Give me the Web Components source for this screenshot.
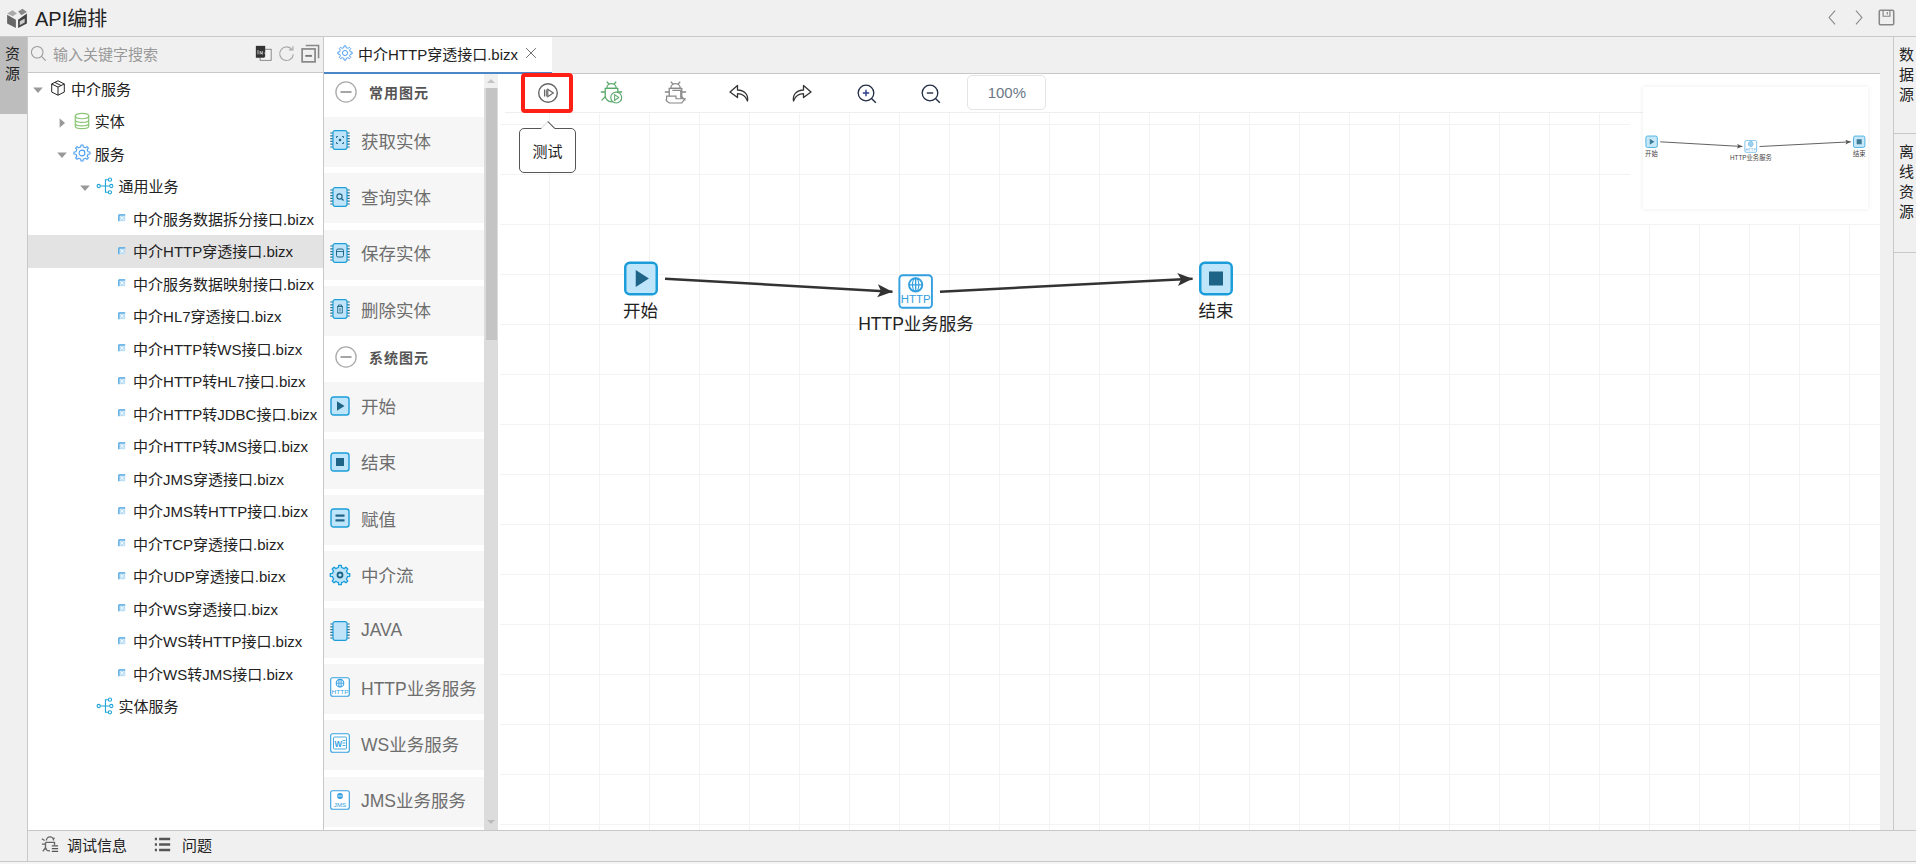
<!DOCTYPE html>
<html lang="zh">
<head>
<meta charset="utf-8">
<title>API编排</title>
<style>
  html, body { margin: 0; height: 100%; overflow: hidden; background: #f5f5f5; }
  body { font-family: "Liberation Sans", "Noto Sans CJK SC", sans-serif; color: #222; }
</style>
</head>
<body>
<app-shell></app-shell>
<script>
// ---- icons ----
function gearPath(cx, cy, R, r, n) {
  let d = "";
  const step = (Math.PI * 2) / n;
  for (let i = 0; i < n; i++) {
    const a = i * step;
    const pts = [[r, a - step * 0.5], [r, a - step * 0.27], [R, a - step * 0.17], [R, a + step * 0.17], [r, a + step * 0.27]];
    pts.forEach((p, j) => {
      d += (i === 0 && j === 0 ? "M" : "L") + (cx + p[0] * Math.cos(p[1])).toFixed(2) + " " + (cy + p[0] * Math.sin(p[1])).toFixed(2);
    });
  }
  return d + "Z";
}

function chip(inner) {
  let pins = "";
  for (let y = 3; y < 18; y += 2.8) pins += `M.3 ${y}h2.7M17 ${y}h2.7`;
  return `<path d="${pins}" stroke="#2b6f92" stroke-width="1.2"/>
    <rect x="3" y=".7" width="14" height="18.6" rx="2" fill="#bfe4fa" stroke="#1c9fd8" stroke-width="1.2"/>${inner}`;
}

const box = (inner) => `<rect x="1" y="1" width="18" height="18" rx="2.5" fill="#bfe5fa" stroke="#1b9dd9" stroke-width="1.4"/>${inner}`;
const dark = "#1d6486";
const blue = "#35a0e0";
const tool = "#666";
const bug = (c) => `<g fill="none" stroke="${c}" stroke-width="1.25"><path d="M6.500 7a4.500 4.500 0 0 1 9 0z"/><path d="M5 7h12v7a6 6 0 0 1-12 0z"/><path d="M6.500 .8l2.500 2.500M15.500 .8L13 3.300M5 10.500H.8M17 10.500h4.200M5 15l-3.500 3.500M17 15l3.500 3.500"/></g>`;

const ICONS = {
  logo: `<path d="M1 6l5-3 4 3-4 2.500z" fill="#aaa"/><path d="M11 4l4-2.500 4 3-5 3z" fill="#8a8a8a"/><path d="M1 7l8 4.500V19l-8-4z" fill="#666"/><path d="M19 6l-8 5.500V19l8-4z" fill="#444"/><path d="M12.500 13l4.500-2.500V14l-4.500 2.500z" fill="#ccc"/>`,
  search: `<circle cx="8.500" cy="8.500" r="6.800" fill="none" stroke="#999" stroke-width="1.200"/><path d="M13.500 13.500l5 5" stroke="#999" stroke-width="1.300"/>`,
  translate: `<rect x="6" y="5" width="13" height="13" fill="#f4f4f4" stroke="#777"/><rect x="1" y="1" width="11" height="14" fill="#333"/><path d="M3.500 6v5M6 11V7.500l2.500 3.500V7M11 9l5 6M16 9l-5 6" stroke="#eee" stroke-width=".9" fill="none"/>`,
  refresh: `<path d="M16.500 5.500A8 8 0 1 0 18 11" fill="none" stroke="#aaa" stroke-width="1.400"/><path d="M13 5.800h4.500V1.500" fill="none" stroke="#aaa" stroke-width="1.400"/>`,
  collapse: `<rect x="1.200" y="5.200" width="13.600" height="13.600" fill="none" stroke="#888" stroke-width="1.800"/><path d="M5 1.500h13.500V15" fill="none" stroke="#888" stroke-width="1.600"/><path d="M4.500 12.500h7" stroke="#777" stroke-width="2"/>`,
  cube: `<g fill="none" stroke="#222" stroke-width="1.100" stroke-linejoin="round"><path d="M10 2l7 3.500v9L10 18l-7-3.500v-9z"/><path d="M3 5.500l7 3.500 7-3.500M10 9v9M6.500 3.800l7 3.500"/></g>`,
  db: `<g fill="none" stroke="#8cc578" stroke-width="1.300"><ellipse cx="10" cy="4.500" rx="7.500" ry="3"/><path d="M2.500 4.500v11c0 1.700 3.400 3 7.500 3s7.500-1.300 7.500-3v-11M2.500 8.500c0 1.700 3.400 3 7.500 3s7.500-1.300 7.500-3M2.500 12.500c0 1.700 3.400 3 7.500 3s7.500-1.300 7.500-3"/></g>`,
  cog: `<path d="${gearPath(10, 10, 9, 6.800, 8)}" fill="none" stroke="#4a9df0" stroke-width="1.200" stroke-linejoin="round"/><circle cx="10" cy="10" r="3.200" fill="none" stroke="#4a9df0" stroke-width="1.200"/>`,
  nodes: `<g fill="none" stroke="#1ea5d8" stroke-width="1.200"><circle cx="3" cy="10" r="1.800"/><circle cx="15.500" cy="3" r="1.800"/><circle cx="17" cy="10" r="1.800"/><circle cx="15.500" cy="17" r="1.800"/><path d="M5 10h10M13.700 3H10.500v14h3.200"/></g>`,
  leaf: `<rect x="2" y="2" width="16" height="16" fill="#bcdff5"/><path d="M2 2h16M2 2v16" stroke="#4aa3e0" stroke-width="3"/><path d="M6 6l8 8M14 6l-8 8" stroke="#fff" stroke-width="2"/>`,
  "down": `<path d="M2 6h16l-8 9z" fill="#999"/>`,
  "right": `<path d="M6 2v16l9-8z" fill="#999"/>`,
  minus: `<circle cx="10" cy="10" r="9.200" fill="none" stroke="#aaa" stroke-width="1.200"/><path d="M5 10h10" stroke="#999" stroke-width="1.600"/>`,
  "chip-get": chip(`<path d="M6.500 8V6.500H8M12 6.500h1.500V8M13.500 12v1.500H12M8 13.500H6.500V12" fill="none" stroke="${dark}" stroke-width=".9"/><circle cx="10" cy="10" r="1.300" fill="${dark}"/>`),
  "chip-query": chip(`<circle cx="9.500" cy="9.500" r="2.600" fill="none" stroke="${dark}" stroke-width="1.100"/><path d="M11.500 11.500l2 2" stroke="${dark}" stroke-width="1.200"/>`),
  "chip-save": chip(`<rect x="6.500" y="6" width="7" height="8" rx="1.500" fill="none" stroke="${dark}" stroke-width="1"/><path d="M6.500 8.500h7" stroke="${dark}" stroke-width=".9"/>`),
  "chip-del": chip(`<path d="M7 7.500h6M8.500 7.500V6h3v1.500M7.700 7.500v6.500h4.600V7.500M10 9v3.500" fill="none" stroke="${dark}" stroke-width=".9"/>`),
  "chip": chip(""),
  start: box(`<path d="M7 5.200l7.500 4.800L7 14.800z" fill="${dark}"/>`),
  end: box(`<rect x="6" y="6" width="8" height="8" fill="${dark}"/>`),
  assign: box(`<rect x="5.500" y="6.500" width="9" height="2.200" fill="${dark}"/><rect x="5.500" y="11.300" width="9" height="2.200" fill="${dark}"/>`),
  flow: `<path d="${gearPath(10, 10, 9.800, 7.600, 8)}" fill="#bfe5fa" stroke="#1b9dd9" stroke-width="1.300" stroke-linejoin="round"/><circle cx="10" cy="10" r="2.500" fill="none" stroke="${dark}" stroke-width="1.800"/>`,
  http: `<rect x=".7" y=".7" width="18.600" height="18.600" rx="2" fill="#fff" stroke="${blue}" stroke-width="1.100"/><circle cx="10" cy="6.200" r="3.800" fill="none" stroke="${blue}" stroke-width="1.100"/><path d="M6.200 6.200h7.600M10 2.400v7.600" stroke="${blue}" stroke-width=".8"/><ellipse cx="10" cy="6.200" rx="1.800" ry="3.800" fill="none" stroke="${blue}" stroke-width=".7"/><text x="10" y="16.700" text-anchor="middle" font-size="6.200" textLength="17" lengthAdjust="spacingAndGlyphs" fill="${blue}" font-family="Liberation Sans">HTTP</text>`,
  ws: `<rect x=".7" y=".7" width="18.600" height="18.600" rx="2" fill="#fff" stroke="${blue}" stroke-width="1.100"/><rect x="3.500" y="4" width="13" height="12" rx="1" fill="none" stroke="${blue}" stroke-width=".9"/><text x="4.600" y="13.500" font-size="9" font-weight="bold" fill="${blue}" font-family="Liberation Sans" textLength="7.500" lengthAdjust="spacingAndGlyphs">W</text><path d="M12.500 7.500h3M12.500 10h3M12.500 12.500h3" stroke="${blue}" stroke-width=".9"/>`,
  jms: `<rect x=".7" y=".7" width="18.600" height="18.600" rx="2" fill="#fff" stroke="${blue}" stroke-width="1.100"/><circle cx="10" cy="6" r="3" fill="${blue}"/><path d="M7.500 6h5" stroke="#fff" stroke-width=".8"/><text x="10" y="16.500" text-anchor="middle" font-size="6.200" fill="${blue}" font-family="Liberation Sans">JMS</text>`,
  run: `<circle cx="11" cy="11" r="9.300" fill="none" stroke="${tool}" stroke-width="1.400"/><path d="M7.500 7.500v7M9.300 7.500v7" stroke="${tool}" stroke-width="1.100"/><path d="M10.800 7.300l5.500 3.700-5.500 3.700z" fill="none" stroke="${tool}" stroke-width="1.200"/>`,
  debug: `${bug("#5aa96c")}<circle cx="15.500" cy="15.800" r="5.200" fill="#fff" stroke="#5aa96c" stroke-width="1.100"/><path d="M14 13l4 2.800-4 2.800z" fill="none" stroke="#5aa96c"/>`,
  "debug-off": `${bug("#888")}<path d="M8 9h8v7" fill="none" stroke="#888" stroke-width="1.100"/><path d="M2.500 14.500h9v2.500h8.500l-3 4H5l-2.500-2z" fill="#fff" stroke="#888" stroke-width="1.100"/>`,
  undo: `<path d="M9.500 3.500L2 10l7.500 5.500v-3.800c4.500 0 8 2 10 7.300 1-6.500-3-10.800-10-11z" fill="none" stroke="#333" stroke-width="1.300" stroke-linejoin="round"/>`,
  redo: `<path d="M12.500 3.500L20 10l-7.500 5.500v-3.800c-4.500 0-8 2-10 7.300-1-6.500 3-10.800 10-11z" fill="none" stroke="#333" stroke-width="1.300" stroke-linejoin="round"/>`,
  "zoom-in": `<circle cx="10" cy="10" r="7.800" fill="none" stroke="#222d44" stroke-width="1.300"/><path d="M15.800 15.800l4 4" stroke="#222d44" stroke-width="1.400"/><path d="M6.800 10h6.400M10 6.800v6.400" stroke="#2a3a8a" stroke-width="1.400"/>`,
  "zoom-out": `<circle cx="10" cy="10" r="7.800" fill="none" stroke="#222d44" stroke-width="1.300"/><path d="M15.800 15.800l4 4" stroke="#222d44" stroke-width="1.400"/><path d="M6.800 10h6.400" stroke="#222d44" stroke-width="1.400"/>`,
  close: `<path d="M3 3l14 14M17 3L3 17" stroke="#555" stroke-width="1.200"/>`,
  prev: `<path d="M13 2l-7 8 7 8" fill="none" stroke="#888" stroke-width="1.300"/>`,
  next: `<path d="M7 2l7 8-7 8" fill="none" stroke="#888" stroke-width="1.300"/>`,
  save: `<rect x="1.500" y="1.500" width="17" height="17" rx="1.500" fill="none" stroke="#888" stroke-width="1.800"/><path d="M6 2v6.500h8V2M11 3.500v3" fill="none" stroke="#888" stroke-width="1.400"/>`,
  "bug-info": `<g fill="none" stroke="#666" stroke-width="1.500"><path d="M6 5a4 4 0 0 1 8 0M5 7h10v3M5 7v6a4.500 4.500 0 0 0 5 3.500M5 9H1M1 3l3 2M15 2l-2 2M5 13l-3 4"/></g><path d="M12 11h7M12 14h7M12 17h7" stroke="#555" stroke-width="1.500"/>`,
  list: `<path d="M1 3.500h2.500M1 10h2.500M1 16.500h2.500" stroke="#555" stroke-width="3"/><path d="M6 3.500h13M6 10h13M6 16.500h13" stroke="#555" stroke-width="2.800"/>`,
};

class UiIcon extends HTMLElement {
  connectedCallback() {
    if (this.shadowRoot) return;
    const root = this.attachShadow({ mode: "open" });
    const name = this.getAttribute("name");
    const size = this.getAttribute("size") || 20;
    const vb = (name === "run" || name === "debug" || name === "debug-off" || name === "undo" || name === "redo") ? 22 : 20;
    root.innerHTML = `
      <style>:host{display:inline-flex;flex:none;width:${size}px;height:${size}px} svg{display:block;width:100%;height:100%;overflow:visible}</style>
      <svg viewBox="0 0 ${vb} ${vb}">${ICONS[name] || ""}</svg>`;
  }
}
customElements.define("ui-icon", UiIcon);

// ---- title bar ----
class TitleBar extends HTMLElement {
  constructor() {
    super();
    this.attachShadow({ mode: "open" });
    this.shadowRoot.innerHTML = `
      <style>
        :host { display: flex; align-items: center; height: 36px; border-bottom: 1px solid #c8c8c8; background: #f0f0f0; padding: 0 21px 0 6px; }
        .name { font-size: 20px; margin-left: 7px; color: #222; flex: 1; }
        .prev { margin-right: 9px; }
        .next { margin-right: 11px; }
      </style>
      <ui-icon name="logo" size="22"></ui-icon>
      <span class="name">API编排</span>
      <ui-icon class="prev" name="prev" size="17"></ui-icon>
      <ui-icon class="next" name="next" size="17"></ui-icon>
      <ui-icon name="save" size="17"></ui-icon>
    `;
  }
}
customElements.define("title-bar", TitleBar);

// ---- side rails ----
class RailTab extends HTMLElement {
  constructor() {
    super();
    this.attachShadow({ mode: "open" });
    this.shadowRoot.innerHTML = `
      <style>
        :host { display: block; box-sizing: border-box; padding: 9px 0 0 4px; font-size: 15px; color: #222; }
        :host([active]) { background: #bdbdbd; }
        :host([divided]) { border-bottom: 1px solid #c8c8c8; }
        span { display: block; width: 15px; writing-mode: vertical-rl; text-orientation: upright; letter-spacing: 5px; line-height: 15px; }
      </style>
      <span><slot></slot></span>
    `;
  }
}
customElements.define("rail-tab", RailTab);

// ---- resource tree ----
class TreeRow extends HTMLElement {
  constructor() {
    super();
    this.attachShadow({ mode: "open" });
  }
  connectedCallback() {
    const level = Number(this.getAttribute("level") || 0);
    const arrow = this.getAttribute("arrow");
    const icon = this.getAttribute("icon");
    const leaf = icon === "leaf";
    this.shadowRoot.innerHTML = `
      <style>
        :host { display: flex; align-items: center; box-sizing: border-box; height: 32.5px; padding-bottom: 1.5px; font-size: 15px; color: #222; padding-left: ${4 + level * 23.7}px; white-space: nowrap; }
        :host([selected]) { background: #e3e3e3; }
        .arrow { width: 12px; height: 12px; margin-right: ${leaf ? 3 : 5}px; flex: none; }
        .ico { margin-right: ${leaf ? 7 : 4}px; }
      </style>
      <span class="arrow">${arrow ? `<ui-icon name="${arrow}" size="12"></ui-icon>` : ""}</span>
      <ui-icon class="ico" name="${icon}" size="${leaf ? 8 : 18}"></ui-icon>
      <slot></slot>
    `;
  }
}
customElements.define("tree-row", TreeRow);

class ResourcePanel extends HTMLElement {
  constructor() {
    super();
    this.attachShadow({ mode: "open" });
    const files = ["中介服务数据拆分接口.bizx", "中介HTTP穿透接口.bizx", "中介服务数据映射接口.bizx", "中介HL7穿透接口.bizx",
      "中介HTTP转WS接口.bizx", "中介HTTP转HL7接口.bizx", "中介HTTP转JDBC接口.bizx", "中介HTTP转JMS接口.bizx", "中介JMS穿透接口.bizx",
      "中介JMS转HTTP接口.bizx", "中介TCP穿透接口.bizx", "中介UDP穿透接口.bizx", "中介WS穿透接口.bizx", "中介WS转HTTP接口.bizx", "中介WS转JMS接口.bizx"];
    this.shadowRoot.innerHTML = `
      <style>
        :host { display: flex; flex-direction: column; width: 295px; flex: none; border-right: 1px solid #c8c8c8; background: #fff; }
        .search { display: flex; align-items: center; box-sizing: border-box; height: 36px; background: #f0f0f0; border-bottom: 1px solid #c8c8c8; padding: 0 3px 2px 2px; }
        .search span { flex: 1; margin-left: 6px; font-size: 15px; color: #999; }
        .search .r { margin-left: 6px; }
      </style>
      <div class="search">
        <ui-icon name="search" size="17"></ui-icon>
        <span>输入关键字搜索</span>
        <ui-icon name="translate" size="17"></ui-icon>
        <ui-icon class="r" name="refresh" size="17"></ui-icon>
        <ui-icon class="r" name="collapse" size="19"></ui-icon>
      </div>
      <div class="tree">
        <tree-row level="0" arrow="down" icon="cube">中介服务</tree-row>
        <tree-row level="1" arrow="right" icon="db">实体</tree-row>
        <tree-row level="1" arrow="down" icon="cog">服务</tree-row>
        <tree-row level="2" arrow="down" icon="nodes">通用业务</tree-row>
        ${files.map((f, i) => `<tree-row level="3" icon="leaf" ${i === 1 ? "selected" : ""}>${f}</tree-row>`).join("")}
        <tree-row level="2" icon="nodes">实体服务</tree-row>
      </div>
    `;
  }
}
customElements.define("resource-panel", ResourcePanel);

// ---- tabs ----
class EditorTabs extends HTMLElement {
  constructor() {
    super();
    this.attachShadow({ mode: "open" });
    this.shadowRoot.innerHTML = `
      <style>
        :host { display: flex; box-sizing: border-box; height: 37px; border-bottom: 1px solid #c8c8c8; }
        .tab { display: flex; align-items: center; box-sizing: border-box; width: 228px; height: 37px; padding: 0 0 2px 13px; background: #fff; border-bottom: 2px solid #4a86c8; font-size: 15px; color: #222; white-space: nowrap; }
        .tab span { margin: 0 6px 0 5px; }
      </style>
      <div class="tab">
        <ui-icon name="cog" size="16"></ui-icon>
        <span>中介HTTP穿透接口.bizx</span>
        <ui-icon name="close" size="14"></ui-icon>
      </div>
    `;
  }
}
customElements.define("editor-tabs", EditorTabs);

// ---- palette ----
class PaletteGroup extends HTMLElement {
  constructor() {
    super();
    this.attachShadow({ mode: "open" });
    this.shadowRoot.innerHTML = `
      <style>
        :host { display: flex; align-items: center; box-sizing: border-box; height: 40px; padding: 0 0 10px 11px; font-size: 14px; font-weight: bold; letter-spacing: 1px; color: #555; }
        :host([first]) { height: 43px; padding-top: 3px; padding-bottom: 10px; }
        span { margin-left: 12px; }
      </style>
      <ui-icon name="minus" size="22"></ui-icon>
      <span><slot></slot></span>
    `;
  }
}
customElements.define("palette-group", PaletteGroup);

class PaletteItem extends HTMLElement {
  constructor() {
    super();
    this.attachShadow({ mode: "open" });
  }
  connectedCallback() {
    this.shadowRoot.innerHTML = `
      <style>
        :host { display: flex; align-items: center; box-sizing: border-box; flex: none; height: 50px; margin-bottom: 6.33px; padding: 0 0 3.5px 6px; background: #f6f6f6; font-size: 17.5px; color: #6e6e6e; white-space: nowrap; }
        span { margin-left: 11px; }
      </style>
      <ui-icon name="${this.getAttribute("icon")}" size="20"></ui-icon>
      <span><slot></slot></span>
    `;
  }
}
customElements.define("palette-item", PaletteItem);

class PalettePanel extends HTMLElement {
  constructor() {
    super();
    this.attachShadow({ mode: "open" });
    this.shadowRoot.innerHTML = `
      <style>
        :host { display: flex; flex: none; width: 174px; height: 756px; overflow: hidden; background: #fff; }
        .list { width: 160px; flex: none; }
        .bar { position: relative; width: 14px; flex: none; background: #dcdcdc; }
        .cap { height: 14px; background: #f0f0f0; display: flex; align-items: center; justify-content: center; }
        .cap i { width: 0; height: 0; border: 4px solid transparent; border-top: 0; border-bottom: 4px solid #c4c4c4; }
        .thumb { height: 252px; margin: 0 1px 0 2px; background: #c4c4c4; }
        .down { position: absolute; left: 3px; bottom: 6px; width: 0; height: 0; border: 4px solid transparent; border-bottom: 0; border-top: 4px solid #bbb; }
      </style>
      <div class="list">
        <palette-group first>常用图元</palette-group>
        <palette-item icon="chip-get">获取实体</palette-item>
        <palette-item icon="chip-query">查询实体</palette-item>
        <palette-item icon="chip-save">保存实体</palette-item>
        <palette-item icon="chip-del">删除实体</palette-item>
        <palette-group>系统图元</palette-group>
        <palette-item icon="start">开始</palette-item>
        <palette-item icon="end">结束</palette-item>
        <palette-item icon="assign">赋值</palette-item>
        <palette-item icon="flow">中介流</palette-item>
        <palette-item icon="chip">JAVA</palette-item>
        <palette-item icon="http">HTTP业务服务</palette-item>
        <palette-item icon="ws">WS业务服务</palette-item>
        <palette-item icon="jms">JMS业务服务</palette-item>
      </div>
      <div class="bar">
        <div class="cap"><i></i></div>
        <div class="thumb"></div>
        <div class="down"></div>
      </div>
    `;
  }
}
customElements.define("palette-panel", PalettePanel);

// ---- toolbar ----
class FlowToolbar extends HTMLElement {
  constructor() {
    super();
    this.attachShadow({ mode: "open" });
    const tools = [["run", 22], ["debug", 23], ["debug-off", 23], ["undo", 22], ["redo", 22], ["zoom-in", 20], ["zoom-out", 20]];
    this.shadowRoot.innerHTML = `
      <style>
        :host { display: flex; align-items: center; box-sizing: border-box; height: 39px; margin-left: 7px; padding-left: 11.2px; border-bottom: 1px solid #eee; background: #fff; }
        .btn { display: flex; justify-content: center; align-items: center; width: 63.6px; flex: none; }
        .zoom { box-sizing: border-box; width: 79px; height: 35px; margin-left: 6px; display: flex; align-items: center; justify-content: center; border: 1px solid #e3e3e8; border-radius: 5px; font-size: 15px; color: #6b7785; }
      </style>
      ${tools.map((t) => `<div class="btn"><ui-icon name="${t[0]}" size="${t[1]}"></ui-icon></div>`).join("")}
      <div class="zoom">100%</div>
    `;
  }
}
customElements.define("flow-toolbar", FlowToolbar);

// ---- diagram ----
class FlowNode extends HTMLElement {
  constructor() {
    super();
    this.attachShadow({ mode: "open" });
  }
  connectedCallback() {
    this.shadowRoot.innerHTML = `
      <style>
        :host { position: absolute; left: ${this.getAttribute("x")}px; top: ${this.getAttribute("y")}px; transform: translateX(-50%); display: flex; flex-direction: column; align-items: center; white-space: nowrap; font-size: 17.5px; color: #222; }
        span { line-height: 24px; margin-top: 3px; }
      </style>
      <ui-icon name="${this.getAttribute("icon")}" size="35"></ui-icon>
      <span><slot></slot></span>
    `;
  }
}
customElements.define("flow-node", FlowNode);

let arrowId = 0;
class FlowDiagram extends HTMLElement {
  constructor() {
    super();
    this.attachShadow({ mode: "open" });
    const id = "head" + arrowId++;
    this.shadowRoot.innerHTML = `
      <style>
        :host { display: block; position: absolute; left: 0; top: 0; width: 900px; height: 360px; }
        svg { position: absolute; left: 0; top: 0; width: 900px; height: 360px; }
      </style>
      <svg viewBox="0 0 900 360">
        <defs><marker id="${id}" markerUnits="userSpaceOnUse" markerWidth="16" markerHeight="14" refX="15" refY="6.500" orient="auto">
          <path d="M0 0L15 6.500L0 13L3.500 6.500Z" fill="#333"/></marker></defs>
        <path d="M167 165.700L394.500 178.700" stroke="#333" stroke-width="2.500" fill="none" marker-end="url(#${id})"/>
        <path d="M442 178.700L694.600 165.700" stroke="#333" stroke-width="2.500" fill="none" marker-end="url(#${id})"/>
      </svg>
      <flow-node x="142.500" y="148" icon="start">开始</flow-node>
      <flow-node x="418" y="161" icon="http">HTTP业务服务</flow-node>
      <flow-node x="718" y="148" icon="end">结束</flow-node>
    `;
  }
}
customElements.define("flow-diagram", FlowDiagram);

class FlowCanvas extends HTMLElement {
  constructor() {
    super();
    this.attachShadow({ mode: "open" });
    this.shadowRoot.innerHTML = `
      <style>
        :host { display: flex; flex-direction: column; position: relative; flex: none; width: 1382px; height: 756px; background: #fff; }
        .stage { position: relative; flex: 1; overflow: hidden; margin-left: 2px;
          background-image: linear-gradient(to right, #f3f3f4 1px, transparent 1px), linear-gradient(to bottom, #f3f3f4 1px, transparent 1px);
          background-size: 50px 50px; background-position: 49px 11px; }
        .stage flow-diagram { margin-left: -2px; }
        .mark { position: absolute; left: 23px; top: -1px; box-sizing: border-box; width: 52px; height: 40px; border: 4px solid #ff2015; border-radius: 4px; }
        .tip { position: absolute; left: 21px; top: 54px; box-sizing: border-box; width: 57px; height: 45px; display: flex; align-items: center; justify-content: center; background: #fff; border: 1px solid #555; border-radius: 5px; font-size: 15px; color: #222; }
        .tip::before { content: ""; position: absolute; left: 23px; top: -6px; box-sizing: border-box; width: 10px; height: 10px; background: #fff; transform: rotate(45deg); border-top: 1px solid #555; border-left: 1px solid #ddd; }
        .panel { position: absolute; left: 1145px; top: 0; width: 237px; height: 150px; background: #fff; }
        .panel::before { content: ""; position: absolute; left: -13px; top: 39px; width: 13px; height: 111px; background: #fff; }
        .mini { position: absolute; left: 0; top: 13px; width: 225px; height: 122px; background: #fff; box-shadow: 0 0 5px rgba(0,0,0,.08); overflow: hidden; }
        .mini flow-diagram { left: -43.300px; top: -5.400px; transform: scale(.361); transform-origin: 0 0; opacity: .85; }
      </style>
      <flow-toolbar></flow-toolbar>
      <div class="stage"><flow-diagram></flow-diagram></div>
      <div class="panel"><div class="mini"><flow-diagram></flow-diagram></div></div>
      <div class="mark"></div>
      <div class="tip">测试</div>
    `;
  }
}
customElements.define("flow-canvas", FlowCanvas);

// ---- bottom bar ----
class BottomBar extends HTMLElement {
  constructor() {
    super();
    this.attachShadow({ mode: "open" });
    this.shadowRoot.innerHTML = `
      <style>
        :host { display: flex; align-items: center; box-sizing: border-box; height: 31px; padding: 0 0 2px 13px; border-top: 1px solid #c8c8c8; background: #f0f0f0; font-size: 15px; color: #222; }
        span { margin-left: 8px; }
        .second { margin-left: 27px; }
        .second + span { margin-left: 11px; }
      </style>
      <ui-icon name="bug-info" size="18"></ui-icon>
      <span>调试信息</span>
      <ui-icon class="second" name="list" size="17"></ui-icon>
      <span>问题</span>
    `;
  }
}
customElements.define("bottom-bar", BottomBar);

// ---- page ----
class AppShell extends HTMLElement {
  constructor() {
    super();
    this.attachShadow({ mode: "open" });
    this.shadowRoot.innerHTML = `
      <style>
        :host { display: flex; flex-direction: column; height: 864px; background: #f0f0f0; }
        .body { display: flex; height: 825px; border-bottom: 1px solid #c8c8c8; }
        .left { width: 27px; flex: none; border-right: 1px solid #c8c8c8; }
        .left rail-tab { height: 77px; padding-top: 9px; }
        .work { flex: 1; display: flex; flex-direction: column; min-width: 0; }
        .top { display: flex; height: 793px; }
        .editor { flex: none; width: 1556px; display: flex; flex-direction: column; }
        .panes { display: flex; }
        .gap { width: 13px; flex: none; }
        .right { flex: 1; border-left: 1px solid #c8c8c8; }
        .right rail-tab { padding-top: 10px; }
        .t1 { height: 97px; }
        .t2 { height: 119px; }
        .foot { height: 2px; background: #f5f5f5; }
      </style>
      <title-bar></title-bar>
      <div class="body">
        <div class="left"><rail-tab active>资源</rail-tab></div>
        <div class="work">
          <div class="top">
            <resource-panel></resource-panel>
            <div class="editor">
              <editor-tabs></editor-tabs>
              <div class="panes">
                <palette-panel></palette-panel>
                <flow-canvas></flow-canvas>
              </div>
            </div>
            <div class="gap"></div>
            <div class="right">
              <rail-tab class="t1" divided>数据源</rail-tab>
              <rail-tab class="t2" divided>离线资源</rail-tab>
            </div>
          </div>
          <bottom-bar></bottom-bar>
        </div>
      </div>
      <div class="foot"></div>
    `;
  }
}
customElements.define("app-shell", AppShell);
</script>
</body>
</html>
